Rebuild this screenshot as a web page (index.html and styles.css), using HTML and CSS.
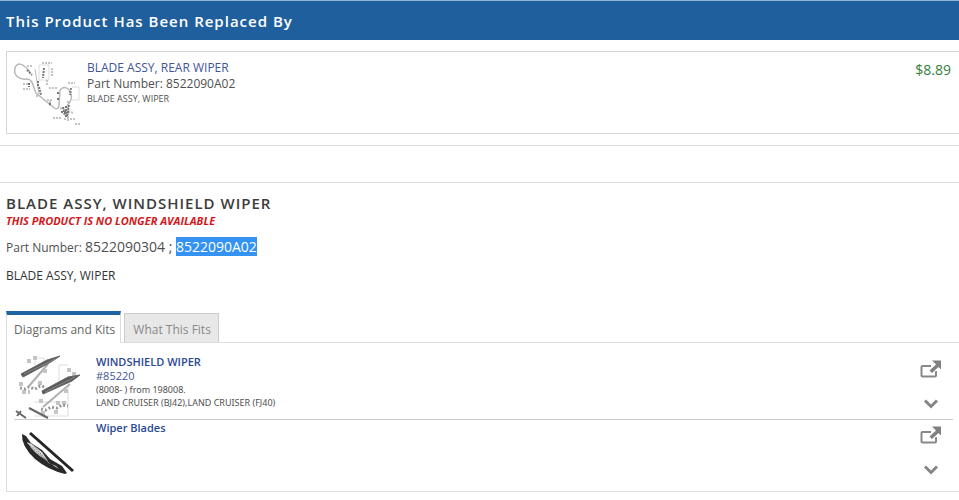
FILE: index.html
```html
<!DOCTYPE html>
<html lang="en">
<head>
<meta charset="utf-8">
<title>BLADE ASSY, WINDSHIELD WIPER</title>
<link rel="stylesheet" href="styles.css">
</head>
<body>
<svg width="0" height="0" class="defs" aria-hidden="true">
  <defs>
    <symbol id="open" viewBox="0 0 22 18">
      <path d="M11 6H2.500Q1.500 6 1.500 7V15.500Q1.500 16.500 2.500 16.500H15Q16 16.500 16 15.500V11" fill="none" stroke="#888" stroke-width="2"/>
      <path d="M12 .5h9v9l-2.500-2.500-6.500 6-2.500-2.500 6.500-6z" fill="#808080" stroke="#fff" stroke-width="2" paint-order="stroke"/>
    </symbol>
    <symbol id="down" viewBox="0 0 16 10">
      <path d="M2 1.500l6 6 6-6" fill="none" stroke="#858585" stroke-width="3"/>
    </symbol>
  </defs>
</svg>
<header class="banner"><h2>This Product Has Been Replaced By</h2></header>
<section class="replacement">
  <article class="card">
    <svg class="card-image" viewBox="0 0 68 66" role="img" aria-label="Rear wiper diagram">
      <path d="M16 10C10 2 3-1 1 6S5 18 12 17s7 8 10 14l17 14c3 3 6 2 6-2l1-15c4-5 9-2 11 4s-2 9-4 12" fill="none" stroke="#b8b8b8" stroke-width="1.500"/>
      <g fill="none" stroke="#bbb" stroke-width="1">
        <path d="M21 7l4 25"/>
        <path d="M25 7V3h10v15H25zM58 25h7v13h-7" stroke="#ddd"/>
      </g>
      <g fill="none" stroke="#c4c4c4" stroke-width="2" stroke-dasharray="2 1">
        <path d="M13 4h6M28 1h10M33 18v5M9 22h7M9 27h7M36 39v6M35 26h8M54 21h7M46 46l13 5M54 39v20M39 56h8M50 57h11M61 62h5M38 6v8M22 34h3M33 38h5"/>
      </g>
      <g fill="none" stroke="#777" stroke-width="2" stroke-dasharray="2 1">
        <path d="M13 8l5 5M24 19v6M25 25l2 8M30 6l-1 10M15 21v4M36 41v3M44 30v3M44 36v2M57 26l-1 7"/>
        <path d="M49 45l2 9M52 44v12M55 43l-2 11M47 50h9"/>
      </g>
    </svg>
    <div class="card-text">
      <a class="name" href="#rear-wiper">BLADE ASSY, REAR WIPER</a>
      <p class="number">Part Number: 8522090A02</p>
      <p class="small">BLADE ASSY, WIPER</p>
    </div>
    <p class="price">$8.89</p>
  </article>
</section>
<main class="product">
  <h1>BLADE ASSY, WINDSHIELD WIPER</h1>
  <p class="unavailable">THIS PRODUCT IS NO LONGER AVAILABLE</p>
  <p class="part">Part Number: <span class="code">8522090304 ; <mark>8522090A02</mark></span></p>
  <p class="description">BLADE ASSY, WIPER</p>
  <div class="tabs" role="tablist">
    <button class="tab active" role="tab" aria-selected="true">Diagrams and Kits</button>
    <button class="tab" role="tab" aria-selected="false">What This Fits</button>
  </div>
  <div class="panel" role="tabpanel">
    <article class="item">
      <svg class="thumb" viewBox="0 0 64 64" role="img" aria-label="Windshield wiper diagram">
        <path d="M21 11V4h9v5M45 27V11h9M20 48h34v14H20M54 33v14" fill="none" stroke="#ddd"/>
        <path d="M34 10L15 32M56 30L29 53" fill="none" stroke="#b0b0b0" stroke-width="2"/>
        <g fill="none" stroke="#c4c4c4" stroke-width="4" stroke-dasharray="4 2">
          <path d="M13 7h5M19 4h5M53 16h5M58 20h4M5 30h4M24 29h5M8 38h8M29 17h4M50 37h4M25 47h5M42 49h10M40 58h5M27 59h4"/>
        </g>
        <path d="M6 34l5 1 4-2 6 2 5-3 6 1M27 55l5 1 5-3 6 1 5-3 6 1" stroke="#999" stroke-width="3" stroke-dasharray="2 2" fill="none"/>
        <path d="M7 20L33 6l13-4-9 6L9 23zM28 37l26-14 12-2-8 6-29 13z" fill="#5a5a5a" stroke="#666"/>
        <path d="M10 20L41 5M31 38l30-15" stroke="#888" fill="none"/>
        <path d="M2 57l10 7M15 54l19 10M3 62l4-5" stroke="#666" stroke-width="2" fill="none"/>
      </svg>
      <div class="item-text">
        <a class="item-name" href="#85220">WINDSHIELD WIPER</a>
        <a class="item-code" href="#85220">#85220</a>
        <p class="small">(8008- ) from 198008.</p>
        <p class="small">LAND CRUISER (BJ42),LAND CRUISER (FJ40)</p>
      </div>
      <div class="actions">
        <a href="#85220" aria-label="Open diagram"><svg class="open"><use href="#open"/></svg></a>
        <button aria-label="Expand diagram"><svg class="down"><use href="#down"/></svg></button>
      </div>
    </article>
    <article class="item">
      <svg class="thumb" viewBox="0 0 64 64" role="img" aria-label="Wiper blades">
        <path d="M16 13L59 51" stroke="#252525" stroke-width="3" fill="none"/>
        <path d="M8 14l4 2 5 7 11 7 8 9 12 7 5 7-2 1q-17-4-30-15Q7 26 8 14z" fill="#292929"/>
        <path d="M13 22l5 2 10 8 6 9q-14-7-21-19zM37 44l5 2 3 3z" fill="#ddd"/>
        <path d="M13 23l23 21M18 24l17 19" fill="none" stroke="#777" stroke-dasharray="2 1"/>
      </svg>
      <div class="item-text"><a class="item-name" href="#wiper-blades">Wiper Blades</a></div>
      <div class="actions">
        <a href="#wiper-blades" aria-label="Open wiper blades"><svg class="open"><use href="#open"/></svg></a>
        <button aria-label="Expand wiper blades"><svg class="down"><use href="#down"/></svg></button>
      </div>
    </article>
  </div>
</main>
</body>
</html>
```
FILE: styles.css
```css
* { box-sizing: border-box; }
body { margin: 0; background: #fff; color: #505050; font-family: "Open Sans", sans-serif; font-size: 12px; line-height: 16px; }
h1, h2, p { margin: 0; }
a { color: #3f5597; text-decoration: none; }
button { border: 0; padding: 0; background: none; font: inherit; }
svg { display: block; }
.defs { position: absolute; }
.banner { height: 40px; padding: 8px 6px; background: #205f9e; border-top: 1px solid #8fb5d8; color: #fff; }
.banner h2 { font-size: 15px; line-height: 24px; font-weight: 600; letter-spacing: 1px; }
.replacement { padding: 11px 0 11px 6px; border-bottom: 1px solid #ddd; }
.card { display: flex; min-height: 83px; padding: 8px 8px 5px 7px; border: 1px solid #d6d6d6; border-right: 0; }
.card-image { width: 68px; height: 66px; margin-right: 5px; margin-top: 2px; overflow: visible; }
.card-text { flex: 1; }
.name { display: block; }
.small { font-size: 9px; line-height: 13px; }
.price { font-size: 14px; line-height: 20px; color: #35803a; }
.product { margin-top: 36px; padding: 9px 0 0 6px; border-top: 1px solid #ddd; }
h1 { font-size: 15px; line-height: 22px; font-weight: 600; letter-spacing: 1px; color: #3c3c3c; }
.unavailable { font-size: 11px; line-height: 14px; font-weight: 700; font-style: italic; color: #d31820; }
.part { margin-top: 8px; line-height: 22px; }
.code { font-size: 14px; }
mark { background: #3392f2; color: #fff; }
.description { margin-top: 9px; color: #333; }
.tabs { display: flex; align-items: flex-end; gap: 3px; margin-top: 27px; }
.tab { height: 29px; padding: 3px 7px 0 8px; border: 1px solid #ccc; border-bottom: 0; background: #e8e8e8; color: #888; }
.tab.active { position: relative; height: 32px; margin-bottom: -1px; padding: 1px 5px 0 7px; border-color: #ddd; border-top: 4px solid #2064a4; background: #fff; color: #666; }
.panel { padding: 11px 6px 7px 7px; border: 1px solid #ddd; border-right: 0; }
.item { display: flex; height: 65px; }
.item + .item { border-top: 1px solid #ccc; }
.item .small { font-family: "Noto Sans", sans-serif; }
.thumb { width: 64px; height: 64px; margin-right: 18px; overflow: visible; }
.item-text { flex: 1; padding-top: 1px; }
.item-name, .item-code { display: block; font-size: 11px; line-height: 14px; }
.item-name { font-weight: 600; color: #2a4893; }
.actions { display: flex; flex-direction: column; align-items: center; gap: 21px; width: 44px; padding-top: 6px; }
.open { width: 22px; height: 18px; }
.down { width: 16px; height: 10px; }
```
